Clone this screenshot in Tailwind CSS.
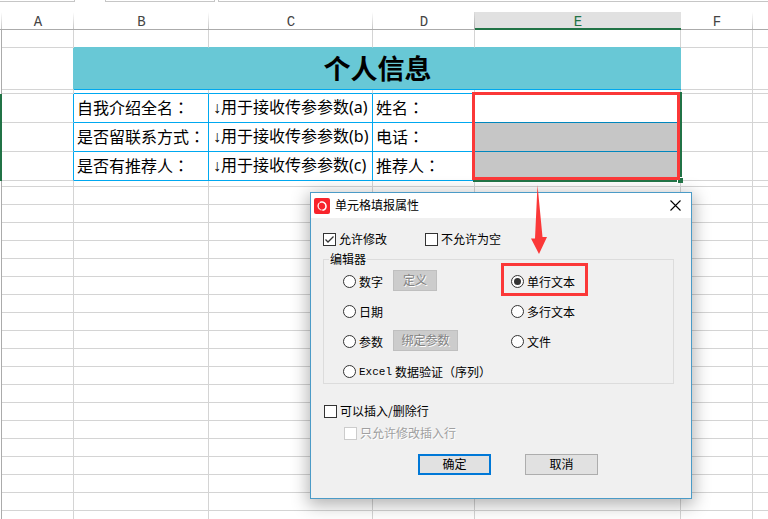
<!DOCTYPE html>
<html lang="zh-CN">
<head>
    <meta charset="UTF-8">
    <meta name="viewport" content="width=device-width, initial-scale=1.0">
    <title>单元格填报属性</title>
    <script src="https://cdn.jsdelivr.net/npm/@tailwindcss/browser@4"></script>
</head>
<body class="relative h-screen overflow-hidden bg-white font-['Noto_Sans','Noto_Sans_CJK_SC',sans-serif] text-black">
    <!-- bottom edge of the formula bar -->
    <div class="flex h-3 items-start">
        <div class="h-[2px] w-[75px] border-r border-b border-[#c6c6c6]"></div>
        <div class="ml-[30px] h-[2px] w-[110px] border-x border-b border-[#c6c6c6]"></div>
        <div class="ml-[3px] h-[2px] flex-1 border-l border-b border-[#c6c6c6]"></div>
    </div>

    <table class="w-full table-fixed border-separate border-spacing-0 text-base leading-6">
        <colgroup>
            <col class="w-[2px]">
            <col class="w-[72px]">
            <col class="w-[135px]">
            <col class="w-[164px]">
            <col class="w-[102px]">
            <col class="w-[206px]">
            <col class="w-[72px]">
            <col>
        </colgroup>
        <thead class="font-['Liberation_Mono',monospace] text-sm leading-[14px] text-[#444]">
            <tr class="h-[18px]">
                <th class="border-b border-[#ababab] bg-[linear-gradient(to_bottom,#fff,#c6c6c6)] bg-[length:1px_100%] bg-right bg-no-repeat p-0"></th>
                <th class="border-b border-[#ababab] bg-[linear-gradient(to_bottom,#fff,#c6c6c6)] bg-[length:1px_100%] bg-right bg-no-repeat p-0 align-bottom font-normal">A</th>
                <th class="border-b border-[#ababab] bg-[linear-gradient(to_bottom,#fff,#c6c6c6)] bg-[length:1px_100%] bg-right bg-no-repeat p-0 align-bottom font-normal">B</th>
                <th class="border-b border-[#ababab] bg-[linear-gradient(to_bottom,#fff,#c6c6c6)] bg-[length:1px_100%] bg-right bg-no-repeat p-0 align-bottom font-normal">C</th>
                <th class="border-b border-[#ababab] bg-[linear-gradient(to_bottom,#ddd,#aaa)] bg-[length:1px_100%] bg-right bg-no-repeat p-0 align-bottom font-normal">D</th>
                <th class="border-b border-[#217346] bg-[#e1e1e1] p-0 align-bottom font-normal text-[#217346] shadow-[inset_0_-1px_0_#217346]">E</th>
                <th class="border-b border-[#ababab] bg-[linear-gradient(to_bottom,#fff,#c6c6c6)] bg-[length:1px_100%] bg-right bg-no-repeat p-0 align-bottom font-normal">F</th>
                <th class="border-b border-[#ababab] p-0"></th>
            </tr>
        </thead>
        <tbody>
            <tr class="h-[18px]">
                <td class="border-r border-[#ababab] p-0"></td>
                <td class="border-r border-b border-[#d4d4d4] p-0"></td>
                <td class="border-r border-b border-r-[#d4d4d4] border-b-[#68c8d6] p-0"></td>
                <td class="border-r border-b border-r-[#d4d4d4] border-b-[#68c8d6] p-0"></td>
                <td class="border-r border-b border-r-[#d4d4d4] border-b-[#68c8d6] p-0"></td>
                <td class="border-r border-b border-r-[#d4d4d4] border-b-[#68c8d6] p-0"></td>
                <td class="border-r border-b border-[#d4d4d4] p-0"></td>
                <td class="border-b border-[#d4d4d4] p-0"></td>
            </tr>
            <tr class="h-[42px]">
                <td class="border-r border-[#ababab] p-0"></td>
                <td class="border-r border-b border-r-[#68c8d6] border-b-[#d4d4d4] p-0"></td>
                <td colspan="4" class="border-b border-[#00a8f0] bg-[#68c8d6] p-0 text-center text-[27px] leading-8 font-bold">个人信息</td>
                <td class="border-r border-b border-[#d4d4d4] p-0"></td>
                <td class="border-b border-[#d4d4d4] p-0"></td>
            </tr>
            <tr class="h-1">
                <td class="border-r border-[#ababab] p-0"></td>
                <td class="border-r border-b border-[#d4d4d4] p-0"></td>
                <td class="border-r border-b border-r-[#d4d4d4] border-b-[#00a8f0] p-0"></td>
                <td class="border-r border-b border-r-[#d4d4d4] border-b-[#00a8f0] p-0"></td>
                <td class="border-r border-b border-r-[#d4d4d4] border-b-[#00a8f0] p-0"></td>
                <td class="border-r border-b border-r-[#d4d4d4] border-b-[#00a8f0] p-0"></td>
                <td class="border-r border-b border-[#d4d4d4] p-0"></td>
                <td class="border-b border-[#d4d4d4] p-0"></td>
            </tr>
            <tr class="h-[29px]">
                <td class="bg-[#217346] p-0"></td>
                <td class="border-r border-b border-r-[#00a8f0] border-b-[#d4d4d4] p-0"></td>
                <td class="border-r border-b border-[#00a8f0] p-0 pb-px pl-[3px] whitespace-nowrap">自我介绍全名<span class="font-['Noto_Sans_CJK_TC',sans-serif]" lang="zh-TW">：</span></td>
                <td class="border-r border-b border-[#00a8f0] p-0 pb-px pl-1 whitespace-nowrap"><span class="font-['Liberation_Sans',sans-serif]">↓</span>用于接收传参参数(a)</td>
                <td class="border-r border-b border-[#00a8f0] p-0 pb-px pl-[3px] whitespace-nowrap">姓名<span class="font-['Noto_Sans_CJK_TC',sans-serif]" lang="zh-TW">：</span></td>
                <td class="relative border-b border-[#0086bd] p-0">
                    <!-- selection frame, fill handle and red callout over E4:E6 -->
                    <div class="absolute -top-[2px] -left-[2px] z-10 h-[90px] w-[209px] border-r-2 border-b-2 border-[#217346]"></div>
                    <div class="absolute top-[83px] left-[202px] z-10 size-[6px] border-t border-l border-white bg-[#217346]"></div>
                    <div class="absolute -top-[2px] -left-[3px] z-10 h-[88px] w-[208px] border-3 border-[#fb3838]"></div>
                </td>
                <td class="border-r border-b border-[#d4d4d4] p-0"></td>
                <td class="border-b border-[#d4d4d4] p-0"></td>
            </tr>
            <tr class="h-[29px]">
                <td class="bg-[#217346] p-0"></td>
                <td class="border-r border-b border-r-[#00a8f0] border-b-[#d4d4d4] p-0"></td>
                <td class="border-r border-b border-[#00a8f0] p-0 pb-px pl-[3px] whitespace-nowrap">是否留联系方式<span class="font-['Noto_Sans_CJK_TC',sans-serif]" lang="zh-TW">：</span></td>
                <td class="border-r border-b border-[#00a8f0] p-0 pb-px pl-1 whitespace-nowrap"><span class="font-['Liberation_Sans',sans-serif]">↓</span>用于接收传参参数(b)</td>
                <td class="border-r border-b border-[#00a8f0] p-0 pb-px pl-[3px] whitespace-nowrap">电话<span class="font-['Noto_Sans_CJK_TC',sans-serif]" lang="zh-TW">：</span></td>
                <td class="border-b border-[#0086bd] bg-[#c6c6c6] p-0"></td>
                <td class="border-r border-b border-[#d4d4d4] p-0"></td>
                <td class="border-b border-[#d4d4d4] p-0"></td>
            </tr>
            <tr class="h-[29px]">
                <td class="bg-[#217346] p-0"></td>
                <td class="border-r border-b border-r-[#00a8f0] border-b-[#d4d4d4] p-0"></td>
                <td class="border-r border-b border-[#00a8f0] p-0 pb-px pl-[3px] whitespace-nowrap">是否有推荐人<span class="font-['Noto_Sans_CJK_TC',sans-serif]" lang="zh-TW">：</span></td>
                <td class="border-r border-b border-[#00a8f0] p-0 pb-px pl-1 whitespace-nowrap"><span class="font-['Liberation_Sans',sans-serif]">↓</span>用于接收传参参数(c)</td>
                <td class="border-r border-b border-[#00a8f0] p-0 pb-px pl-[3px] whitespace-nowrap">推荐人<span class="font-['Noto_Sans_CJK_TC',sans-serif]" lang="zh-TW">：</span></td>
                <td class="border-b border-[#0086bd] bg-[#c6c6c6] p-0"></td>
                <td class="border-r border-b border-[#d4d4d4] p-0"></td>
                <td class="border-b border-[#d4d4d4] p-0"></td>
            </tr>
        </tbody>
        <tbody id="empty-rows"></tbody>
    </table>

    <div role="dialog" aria-labelledby="dialog-title" class="absolute top-[192px] left-[310px] w-[382px] border border-[#4b9bc7] bg-[#f0f0f0] font-['Noto_Sans_CJK_SC',sans-serif] text-xs leading-4 shadow-[0_4px_16px_2px_rgba(0,0,0,0.3)]">
        <div class="flex h-[25px] items-center bg-white pl-[3px]">
            <svg class="size-4" viewBox="0 0 16 16" fill="none">
                <rect width="16" height="16" rx="2" fill="#f8242c"/>
                <circle cx="8" cy="8" r="4" stroke="#fff" stroke-opacity="0.5" stroke-width="1.2"/>
                <path d="M6 4.4C8.600 3 12 5 12 8.200C12 10.500 10.500 12 8.500 12.200" stroke="#fff" stroke-width="1.4"/>
                <path d="M5 5.200C3.400 7.500 4.200 10.500 6.500 11.700" stroke="#fff" stroke-width="1"/>
            </svg>
            <h2 id="dialog-title" class="ml-[5px] pb-[2px]">单元格填报属性</h2>
            <button class="mr-[10px] ml-auto" aria-label="关闭">
                <svg class="size-[11px]" viewBox="0 0 11 11" fill="none" stroke="#000" stroke-width="1.100">
                    <path d="M0.500 0.500L10.500 10.500M10.500 0.500L0.500 10.500"/>
                </svg>
            </button>
        </div>
        <form class="pt-[13px] pr-[17px] pb-[23px] pl-3">
            <div class="flex">
                <label class="flex w-[102px] items-center gap-[3px]">
                    <span class="relative flex">
                        <input type="checkbox" checked class="size-[13px] appearance-none border border-[#333] bg-white">
                        <svg class="pointer-events-none absolute inset-0 size-[13px]" viewBox="0 0 13 13" fill="none" stroke="#333" stroke-width="1.300">
                            <path d="M2.500 6.500L5 9L10.500 3.500"/>
                        </svg>
                    </span>
                    允许修改
                </label>
                <label class="flex items-center gap-[3px]">
                    <input type="checkbox" class="size-[13px] appearance-none border border-[#333] bg-white">
                    不允许为空
                </label>
            </div>
            <fieldset class="mt-[5px] border border-[#dcdcdc]">
                <legend class="ml-[5px] px-px leading-[14px]">编辑器</legend>
                <div class="grid grid-cols-[168px_1fr] gap-y-[7px] pt-1 pl-[19px]">
                    <div class="flex h-[23px] items-center gap-[10px]">
                        <label class="flex items-center gap-[3px]"><input type="radio" name="editor" class="size-[13px] appearance-none rounded-full border border-[#333] bg-white">数字</label>
                        <button type="button" disabled class="h-[21px] w-11 self-start border border-[#bfbfbf] bg-[#ccc] pb-[2px] text-[#838383] text-shadow-[1px_1px_0_#fff]">定义</button>
                    </div>
                    <div class="flex h-[23px] items-center">
                        <label class="relative flex items-center gap-[3px]">
                            <input type="radio" name="editor" checked class="flex size-[13px] appearance-none items-center justify-center rounded-full border border-[#333] bg-white before:size-[7px] before:rounded-full before:bg-[#333] before:content-['']">单行文本
                            <span class="absolute -top-[11px] -left-[10px] h-[33px] w-[87px] border-3 border-[#fb3838]"></span>
                        </label>
                    </div>
                    <div class="flex h-[23px] items-center">
                        <label class="flex items-center gap-[3px]"><input type="radio" name="editor" class="size-[13px] appearance-none rounded-full border border-[#333] bg-white">日期</label>
                    </div>
                    <div class="flex h-[23px] items-center">
                        <label class="flex items-center gap-[3px]"><input type="radio" name="editor" class="size-[13px] appearance-none rounded-full border border-[#333] bg-white">多行文本</label>
                    </div>
                    <div class="flex h-[23px] items-center gap-[10px]">
                        <label class="flex items-center gap-[3px]"><input type="radio" name="editor" class="size-[13px] appearance-none rounded-full border border-[#333] bg-white">参数</label>
                        <button type="button" disabled class="h-[21px] w-[65px] self-start border border-[#bfbfbf] bg-[#ccc] pb-[2px] text-[#838383] text-shadow-[1px_1px_0_#fff]">绑定参数</button>
                    </div>
                    <div class="flex h-[23px] items-center">
                        <label class="flex items-center gap-[3px]"><input type="radio" name="editor" class="size-[13px] appearance-none rounded-full border border-[#333] bg-white">文件</label>
                    </div>
                    <div class="flex h-[23px] items-center">
                        <label class="flex items-center gap-[3px] whitespace-nowrap"><input type="radio" name="editor" class="size-[13px] appearance-none rounded-full border border-[#333] bg-white"><span class="font-['Liberation_Mono',monospace] text-[11px]">Excel</span><span>数据验证（序列）</span></label>
                    </div>
                </div>
            </fieldset>
            <label class="mt-[19px] ml-px flex items-center gap-[3px]">
                <input type="checkbox" class="size-[13px] appearance-none border border-[#333] bg-white">
                可以插入/删除行
            </label>
            <label class="mt-[6px] ml-[21px] flex items-center gap-[3px] text-[#a0a0a0] text-shadow-[1px_1px_0_#fff]">
                <input type="checkbox" disabled class="size-[13px] appearance-none border border-[#ccc] bg-white">
                只允许修改插入行
            </label>
            <div class="mt-[13px] flex gap-[34px] pl-[95px]">
                <button type="submit" class="h-[21px] w-[73px] border-2 border-[#0078d7] bg-[#e1e1e1] pb-[2px]">确定</button>
                <button type="button" class="h-[21px] w-[73px] border border-[#adadad] bg-[#e1e1e1] pb-[2px]">取消</button>
            </div>
        </form>
    </div>

    <!-- arrow from the selected cells to the radio button -->
    <svg class="pointer-events-none absolute top-[185px] left-[530px] h-[69px] w-[18px]" viewBox="0 0 18 69" fill="#fb3838">
        <path d="M7.500 0L5 53.500L1 53.500L9 69L17 52L12.500 52Z"/>
    </svg>

    <script>
        const emptyRows = document.getElementById('empty-rows');
        for (let i = 0; i < 20; i++) {
            const row = document.createElement('tr');
            // first row is a thin spacer
            row.className = i === 0 ? 'h-[6px]' : 'h-[18px]';
            row.innerHTML = '<td class="border-r border-[#ababab] p-0"></td>'
                + '<td class="border-r border-b border-[#d4d4d4] p-0"></td>'.repeat(6)
                + '<td class="border-b border-[#d4d4d4] p-0"></td>';
            emptyRows.appendChild(row);
        }

        document.querySelector('form').addEventListener('submit', e => e.preventDefault());
    </script>
</body>
</html>
